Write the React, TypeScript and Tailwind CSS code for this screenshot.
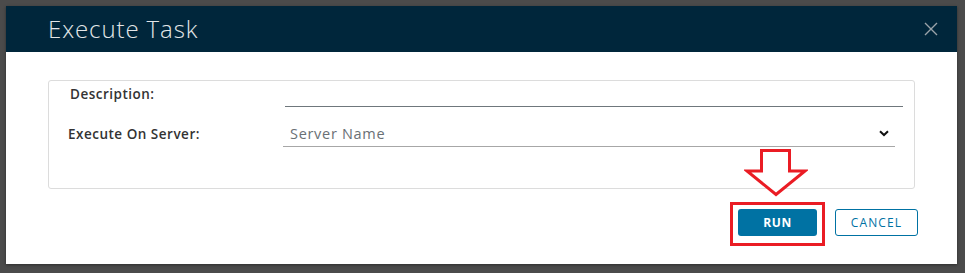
import React from "react";

export default function App() {
  return (
    <div
      className="relative w-[965px] h-[273px] bg-[#4b4b4b] pt-[6px] pl-[6px] overflow-hidden"
      style={{ fontFamily: '"Open Sans", "Liberation Sans", sans-serif' }}
    >
      <div className="w-[951px] h-[258px] bg-white flex flex-col shadow-[0_1px_3px_rgba(0,0,0,0.4)]">
        <div className="h-[46px] bg-[#00263b] flex items-center justify-between pl-[42px] pr-[19px] shrink-0">
          <span className="text-[24px] font-light text-[#e3e6e8] leading-none tracking-[0.9px]">Execute Task</span>
          <svg width="14" height="14" viewBox="0 0 14 14" className="block">
            <path d="M1 1 L13 13 M13 1 L1 13" stroke="#9aa3a9" strokeWidth="1.4" />
          </svg>
        </div>
        <div className="px-[42px] pt-[28px]">
          <div className="h-[109px] border border-[#dcdcdc] rounded-[3px] flex flex-col">
            <div className="h-[32px] flex items-end pl-[21px] pr-[11px]">
              <div className="w-[215px] self-start pt-[3px] text-[13.5px] font-semibold text-[#333] tracking-[0.5px]">Description:</div>
              <div className="flex-1 border-b border-[#6f777c] mb-[6px] h-[1px]" />
            </div>
            <div className="flex items-center pl-[19px] pr-[19px] mt-[8px]">
              <div className="w-[215px] text-[13.5px] font-semibold text-[#333] tracking-[0.5px]">Execute On Server:</div>
              <div className="flex-1 flex items-center justify-between border-b border-[#a7a7a7] h-[26px] pl-[7px] pr-[6px]">
                <span className="text-[14.5px] text-[#6a7075] tracking-[0.7px]">Server Name</span>
                <svg width="10" height="7" viewBox="0 0 10 7">
                  <path d="M1 1.2 L5 5 L9 1.2" stroke="#111" strokeWidth="2" fill="none" />
                </svg>
              </div>
            </div>
          </div>
          <div className="flex justify-end gap-[18px] mt-[20px] mr-[-3px]">
            <button className="w-[79px] h-[27px] bg-[#0072a3] rounded-[3px] text-white text-[12px] font-bold tracking-[0.6px]">
              RUN
            </button>
            <button className="w-[83px] h-[27px] border border-[#0072a3] rounded-[3px] text-[#0072a3] text-[12px] font-normal tracking-[1.1px]">
              CANCEL
            </button>
          </div>
        </div>
      </div>
      <div className="absolute left-[730px] top-[202px] w-[95px] h-[44px] border-[3px] border-[#ea1c24]" />
      <svg className="absolute left-[744px] top-[147px]" width="64" height="52" viewBox="744 147 64 52">
        <polygon
          points="761.5,150.5 789.5,150.5 789.5,171 805,171 776,194.5 747,171 761.5,171"
          fill="white"
          stroke="#ea1c24"
          strokeWidth="3"
          strokeLinejoin="miter"
        />
      </svg>
    </div>
  );
}
